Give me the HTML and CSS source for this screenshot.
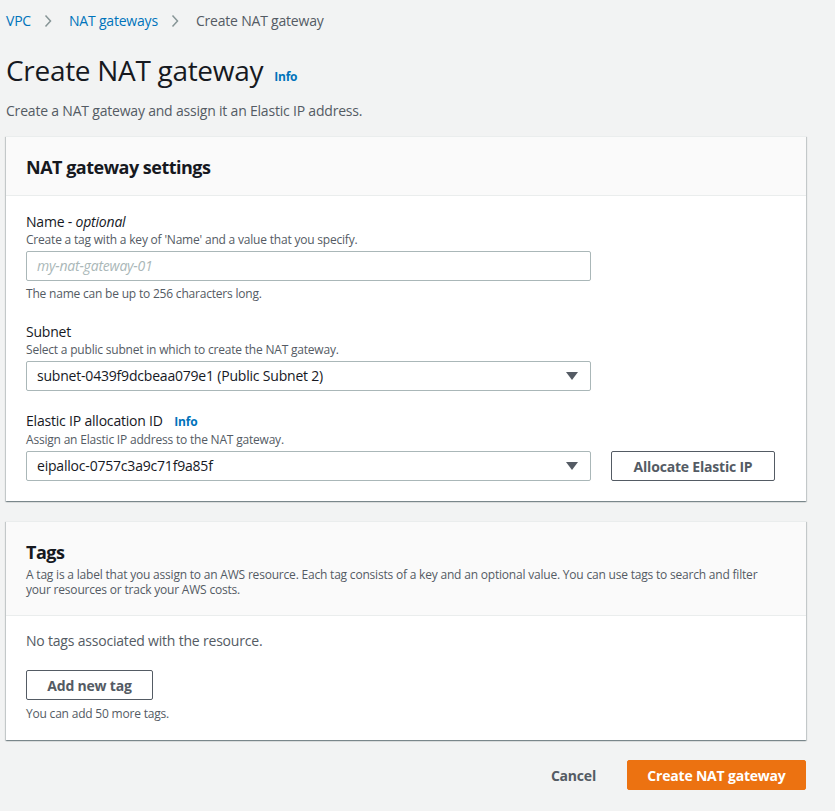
FILE: index.html
```html
<!DOCTYPE html>
<html>
<head>
<meta charset="utf-8">
<link rel="stylesheet" href="styles.css">
</head>
<body>
<div class="page">
  <nav class="crumbs">
    <a class="crumb-link">VPC</a>
    <svg class="chev" width="8" height="14" viewBox="0 0 8 14"><path d="M1.5 1.5 L6.5 7 L1.5 12.5" fill="none" stroke="#879596" stroke-width="1.5"/></svg>
    <a class="crumb-link">NAT gateways</a>
    <svg class="chev" width="8" height="14" viewBox="0 0 8 14"><path d="M1.5 1.5 L6.5 7 L1.5 12.5" fill="none" stroke="#879596" stroke-width="1.5"/></svg>
    <span class="crumb-current">Create NAT gateway</span>
  </nav>

  <div class="title-row">
    <h1 class="title">Create NAT gateway</h1>
    <a class="info">Info</a>
  </div>
  <p class="page-desc">Create a NAT gateway and assign it an Elastic IP address.</p>

  <section class="card">
    <div class="card-head">
      <h2 class="card-title">NAT gateway settings</h2>
    </div>
    <div class="card-body">
      <div class="field">
        <div class="label">Name - <i>optional</i></div>
        <div class="desc">Create a tag with a key of 'Name' and a value that you specify.</div>
        <div class="input placeholder">my-nat-gateway-01</div>
        <div class="hint">The name can be up to 256 characters long.</div>
      </div>
      <div class="field">
        <div class="label">Subnet</div>
        <div class="desc">Select a public subnet in which to create the NAT gateway.</div>
        <div class="input select"><span>subnet-0439f9dcbeaa079e1 (Public Subnet 2)</span><span class="caret"></span></div>
      </div>
      <div class="field last">
        <div class="label">Elastic IP allocation ID <a class="info small">Info</a></div>
        <div class="desc">Assign an Elastic IP address to the NAT gateway.</div>
        <div class="row">
          <div class="input select"><span>eipalloc-0757c3a9c71f9a85f</span><span class="caret"></span></div>
          <button class="btn alloc">Allocate Elastic IP</button>
        </div>
      </div>
    </div>
  </section>

  <section class="card tags">
    <div class="card-head tall">
      <h2 class="card-title">Tags</h2>
      <div class="head-desc">A tag is a label that you assign to an AWS resource. Each tag consists of a key and an optional value. You can use tags to search and filter your resources or track your AWS costs.</div>
    </div>
    <div class="card-body tags-body">
      <div class="empty">No tags associated with the resource.</div>
      <button class="btn addtag">Add new tag</button>
      <div class="hint">You can add 50 more tags.</div>
    </div>
  </section>

  <div class="actions">
    <button class="link-btn">Cancel</button>
    <button class="btn primary">Create NAT gateway</button>
  </div>
</div>
</body>
</html>
```

FILE: styles.css
```css
* { box-sizing: border-box; }
html, body { margin: 0; padding: 0; background: #f2f3f3; }
body {
  font-family: "Open Sans", "Noto Sans", "Liberation Sans", sans-serif;
  color: #16191f;
  letter-spacing: -0.2px;
}
.page {
  width: 800px;
  margin-left: 6px;
  padding-top: 11px;
}
.crumbs {
  display: flex;
  align-items: center;
  font-size: 14px;
  line-height: 20px;
  height: 20px;
}
.crumb-link { color: #0073bb; }
.chev { margin: 0 17px 0 13px; }
.crumb-current { color: #545b64; }

.title-row {
  display: flex;
  align-items: baseline;
  margin-top: 22px;
}
.title {
  margin: 0;
  font-size: 28px;
  font-weight: 400;
  line-height: 34px;
  letter-spacing: -0.3px;
}
.info {
  color: #0073bb;
  font-weight: 700;
  font-size: 12px;
  margin-left: 11px;
  letter-spacing: -0.2px;
}
.info.small { margin-left: 8px; }
.page-desc {
  margin: 14px 0 0;
  font-size: 14px;
  line-height: 20px;
  color: #545b64;
}
.card {
  background: #fff;
  margin-top: 15px;
  box-shadow: 0 1px 1px 0 rgba(0,28,36,.3), 1px 1px 1px 0 rgba(0,28,36,.15), -1px 1px 1px 0 rgba(0,28,36,.15);
  border-top: 1px solid #eaeded;
}
.card-head {
  background: #fafafa;
  border-bottom: 1px solid #eaeded;
  padding: 18px 20px 16px;
}
.card-title {
  margin: 0;
  font-size: 18px;
  font-weight: 700;
  line-height: 24px;
  letter-spacing: -0.5px;
}
.card-body { padding: 16px 20px 20px; }
.field { margin-bottom: 20px; }
.field.last { margin-bottom: 0; }
.label {
  font-size: 14px;
  line-height: 20px;
}
.desc, .hint, .head-desc {
  font-size: 12px;
  line-height: 16px;
  color: #545b64;
}
.desc { margin-bottom: 3px; }
.hint { margin-top: 5px; }
.input {
  width: 565px;
  height: 30px;
  border: 1px solid #aab7b8;
  border-radius: 2px;
  padding: 0 10px;
  font-size: 14px;
  line-height: 28px;
  display: flex;
  align-items: center;
  justify-content: space-between;
}
.placeholder { color: #aab7b8; font-style: italic; }
.caret {
  width: 0; height: 0;
  border-left: 6px solid transparent;
  border-right: 6px solid transparent;
  border-top: 8px solid #545b64;
  margin-right: 2px;
}
.row { display: flex; gap: 20px; }
.btn {
  display: block;
  font-family: inherit;
  height: 30px;
  border: 1px solid #545b64;
  border-radius: 2px;
  background: #fff;
  color: #545b64;
  font-size: 14px;
  font-weight: 700;
  padding: 0;
  white-space: nowrap;
  letter-spacing: -0.2px;
}
.alloc { width: 164px; }
.head-desc { margin-top: 3px; line-height: 15px; padding-right: 20px; }
.card-head.tall { padding: 18px 20px 18px; }
.tags { margin-top: 20px; }
.tags-body { padding: 15px 20px 18px; }
.empty {
  font-size: 14px;
  line-height: 20px;
  color: #545b64;
  margin-bottom: 19px;
}
.addtag { width: 127px; }
.tags-body .hint { margin-top: 6px; }
.actions {
  display: flex;
  justify-content: flex-end;
  align-items: center;
  margin-top: 20px;
  gap: 20px;
}
.link-btn {
  font-family: inherit;
  background: none;
  border: none;
  color: #545b64;
  font-weight: 700;
  font-size: 14px;
  padding: 0 11px;
  letter-spacing: -0.2px;
}
.btn.primary {
  background: #ec7211;
  border-color: #ec7211;
  color: #fff;
  width: 179px;
}
```
